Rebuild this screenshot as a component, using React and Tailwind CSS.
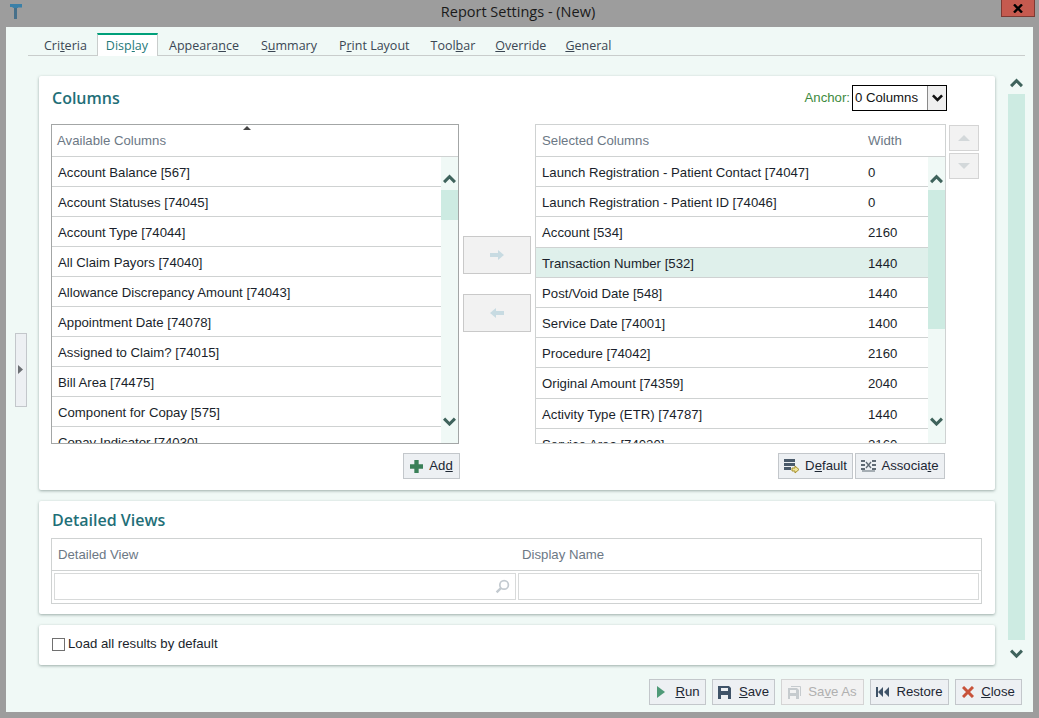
import React from 'react';

const available = [
    'Account Balance [567]',
    'Account Statuses [74045]',
    'Account Type [74044]',
    'All Claim Payors [74040]',
    'Allowance Discrepancy Amount [74043]',
    'Appointment Date [74078]',
    'Assigned to Claim? [74015]',
    'Bill Area [74475]',
    'Component for Copay [575]',
    'Copay Indicator [74030]',
];

const selected = [
    ['Launch Registration - Patient Contact [74047]', '0'],
    ['Launch Registration - Patient ID [74046]', '0'],
    ['Account [534]', '2160'],
    ['Transaction Number [532]', '1440'],
    ['Post/Void Date [548]', '1440'],
    ['Service Date [74001]', '1400'],
    ['Procedure [74042]', '2160'],
    ['Original Amount [74359]', '2040'],
    ['Activity Type (ETR) [74787]', '1440'],
    ['Service Area [74020]', '2160'],
];

const tabs = [
    { pre: 'Cri', key: 't', post: 'eria', cls: 'px-[11px]' },
    { pre: 'Disp', key: 'l', post: 'ay', active: true },
    { pre: 'Appeara', key: 'n', post: 'ce', cls: 'px-[11px]' },
    { pre: 'S', key: 'u', post: 'mmary', cls: 'px-[11px]' },
    { pre: 'P', key: 'r', post: 'int Layout', cls: 'px-[11px]' },
    { pre: 'Tool', key: 'b', post: 'ar', cls: 'px-[10px]' },
    { pre: '', key: 'O', post: 'verride', cls: 'pl-[10px] pr-[9.500px]' },
    { pre: '', key: 'G', post: 'eneral', cls: 'px-[9.500px]' },
];

const Chevron = ({ down, color = '#3f635c', size = 13 }) => (
    <svg width={size} height={size * 0.75} viewBox="0 0 12 9">
        <path d={down ? 'M1 1.500l5 5 5-5' : 'M1 7.500l5-5 5 5'} fill="none" stroke={color} strokeWidth="2.800" />
    </svg>
);

// list scrollbar: arrow, thumb, empty track, arrow
const ListScroll = ({ thumb }) => (
    <div className="w-[17px] bg-[#f0f9f6] flex flex-col items-center shrink-0">
        <div className="h-[33px] w-full flex items-end justify-center pb-[6px]"><Chevron /></div>
        <div className={`w-full bg-[#cdebe2] ${thumb}`}></div>
        <div className="flex-1"></div>
        <div className="h-[43px] w-full flex items-center justify-center"><Chevron down /></div>
    </div>
);

const ActionButton = ({ icon, className = '', children }) => (
    <button className={`h-[26px] flex items-center justify-center gap-[5px] bg-[#edf0f3] border border-[#c3c7cb] text-[13.200px] text-[#1d2733] ${className}`}>
        {icon}
        <span>{children}</span>
    </button>
);

const App = () => {
    return (
        <div className="h-[718px] w-[1039px] bg-[#9d9d9d] flex flex-col overflow-hidden font-['Liberation_Sans',sans-serif]">
            {/* Title bar */}
            <div className="h-[27px] flex items-start shrink-0">
                <svg className="ml-[9px] mt-[4px]" width="14" height="15" viewBox="0 0 14 15">
                    <path d="M1 0h12v3.500H9V4H4.500L3 3H1z" fill="#3a80a8" />
                    <path d="M5 4h3v11H5z" fill="#47708a" />
                </svg>
                <div className="flex-1 text-center text-[14.500px] leading-[23px] text-[#1a1a1a] pl-[12px] font-['Open_Sans',sans-serif]">Report Settings - (New)</div>
                <button className="w-[34px] h-[17px] mr-[4px] bg-[#c55a4f] border border-[#7d3a33] border-t-0 flex items-center justify-center">
                    <svg width="10" height="9" viewBox="0 0 10 9">
                        <path d="M1 .5l8 8M9 .5l-8 8" stroke="#000" strokeWidth="2.400" />
                    </svg>
                </button>
            </div>

            <div className="flex-1 mx-[6px] mb-[6px] bg-[#f0f9f6] flex flex-col">
                {/* Tabs */}
                <div className="ml-[22px] mr-[8px] mt-[6px] h-[23px] pl-[5px] flex border-b border-[#c9cdcc] font-['Open_Sans',sans-serif] text-[12.500px] text-[#3b4754]">
                    {tabs.map((t) => (
                        <div
                            key={t.pre + t.key}
                            className={t.active
                                ? 'h-[23px] -ml-px pl-[8px] pr-[9px] bg-white border-x border-[#c9cdcc] border-t-2 border-t-[#00a07a] text-[#1f7a7a] leading-[21px]'
                                : `h-[22px] leading-[26px] ${t.cls}`}
                        >
                            {t.pre}<u>{t.key}</u>{t.post}
                        </div>
                    ))}
                </div>

                {/* Main area */}
                <div className="mt-[20px] h-[589px] flex items-center pl-[9px]">
                    <div className="w-[12px] h-[74px] mb-[2px] bg-[#edf0f3] border border-[#c3c7cb] flex items-center justify-center shrink-0">
                        <svg width="6" height="9" viewBox="0 0 6 9"><path d="M0 0l5 4.500-5 4.500z" fill="#6b6f73" /></svg>
                    </div>

                    <div className="ml-[12px] w-[956px] h-full flex flex-col gap-[11px] shrink-0">
                        {/* Columns card */}
                        <div className="h-[414px] bg-white rounded-[2px] shadow-[0_1px_3px_rgba(120,140,135,0.7)] pl-[12px] shrink-0">
                            <div className="h-[48px] flex items-center pr-[48px] pb-[4px]">
                                <h2 className="flex-1 pl-[1px] text-[16px] font-semibold text-[#1f6f78] font-['Open_Sans',sans-serif]">Columns</h2>
                                <span className="text-[13.200px] text-[#3d8a3d] mr-[2px]">Anchor:</span>
                                <div className="w-[95px] h-[26px] border border-black flex items-center text-[13.200px] text-[#111] pl-[2px]">
                                    <span className="flex-1">0 Columns</span>
                                    <div className="w-[19px] h-full bg-[#efefef] border-l border-[#8a8a8a] flex items-center justify-center">
                                        <Chevron down color="#111" size={11} />
                                    </div>
                                </div>
                            </div>

                            <div className="flex">
                                {/* Available */}
                                <div className="w-[408px] h-[320px] border border-[#a3a6a6] flex flex-col shrink-0 relative">
                                    <div className="absolute left-[191px] top-[1px] w-0 h-0 border-x-[4px] border-x-transparent border-b-[4px] border-b-[#444]"></div>
                                    <div className="h-[32px] border-b border-[#cfd2d2] text-[13.200px] text-[#6c7885] pl-[5px] leading-[32px] shrink-0">Available Columns</div>
                                    <div className="flex-1 flex min-h-0">
                                        <div className="flex-1 overflow-hidden">
                                            {available.map((name) => (
                                                <div key={name} className="h-[30px] border-b border-[#cfd2d2] pl-[6px] text-[13.200px] text-[#1a1f2b] leading-[31px] whitespace-nowrap">{name}</div>
                                            ))}
                                        </div>
                                        <ListScroll thumb="h-[30px]" />
                                    </div>
                                </div>

                                {/* Move buttons */}
                                <div className="w-[76px] shrink-0 flex flex-col items-center pt-[112px] gap-[20px]">
                                    <button className="w-[68px] h-[38px] bg-[#f2f2f2] border border-[#c9c9c9] flex items-center justify-center">
                                        <svg width="14" height="10" viewBox="0 0 14 10"><path d="M0 3h8V0l6 5-6 5V7H0z" fill="#c8dbe2" /></svg>
                                    </button>
                                    <button className="w-[68px] h-[38px] bg-[#f2f2f2] border border-[#c9c9c9] flex items-center justify-center">
                                        <svg width="14" height="10" viewBox="0 0 14 10"><path d="M14 3H6V0L0 5l6 5V7h8z" fill="#c8dbe2" /></svg>
                                    </button>
                                </div>

                                {/* Selected */}
                                <div className="w-[411px] h-[320px] border border-[#cfd2d2] flex flex-col shrink-0">
                                    <div className="h-[32px] border-b border-[#cfd2d2] text-[13.200px] text-[#6c7885] pl-[6px] leading-[32px] flex shrink-0">
                                        <span className="w-[326px]">Selected Columns</span>
                                        <span>Width</span>
                                    </div>
                                    <div className="flex-1 flex min-h-0">
                                        <div className="flex-1 overflow-hidden">
                                            {selected.map(([name, width], i) => (
                                                <div key={name} className={`h-[30.200px] border-b border-[#cfd2d2] pl-[6px] text-[13.200px] text-[#1a1f2b] leading-[31px] whitespace-nowrap flex ${i === 3 ? 'bg-[#dff0eb]' : ''}`}>
                                                    <span className="w-[326px]">{name}</span>
                                                    <span>{width}</span>
                                                </div>
                                            ))}
                                        </div>
                                        <ListScroll thumb="h-[139px]" />
                                    </div>
                                </div>

                                {/* Order buttons */}
                                <div className="ml-[3px] flex flex-col gap-[2px] pt-[1px]">
                                    <button className="w-[30px] h-[26px] bg-[#f2f2f2] border border-[#d4d4d4] flex items-center justify-center">
                                        <svg width="12" height="6" viewBox="0 0 12 6"><path d="M6 0l6 6H0z" fill="#d3d8da" /></svg>
                                    </button>
                                    <button className="w-[30px] h-[26px] bg-[#f2f2f2] border border-[#d4d4d4] flex items-center justify-center">
                                        <svg width="12" height="6" viewBox="0 0 12 6"><path d="M0 0h12L6 6z" fill="#d3d8da" /></svg>
                                    </button>
                                </div>
                            </div>

                            {/* List actions */}
                            <div className="flex mt-[9px]">
                                <div className="w-[409px] flex justify-end">
                                    <ActionButton
                                        className="w-[57px]"
                                        icon={<svg className="mr-[1px]" width="13" height="13" viewBox="0 0 12 12"><path d="M4 0h4v4h4v4H8v4H4V8H0V4h4z" fill="#3a8058" /></svg>}
                                    >
                                        Ad<u>d</u>
                                    </ActionButton>
                                </div>
                                <div className="w-[485px] flex justify-end gap-[2px]">
                                    <ActionButton
                                        className="w-[75px]"
                                        icon={
                                            <svg width="16" height="15" viewBox="0 0 16 15">
                                                <path d="M0 0h11v3H0zM0 4h11v3H0zM0 8h7v3H0z" fill="#4a5a6a" />
                                                <path d="M8 9h3V7l4 3.500-4 3.500v-2H8z" fill="#efe59a" stroke="#a8912c" strokeWidth="1" />
                                            </svg>
                                        }
                                    >
                                        D<u>e</u>fault
                                    </ActionButton>
                                    <ActionButton
                                        className="w-[90px]"
                                        icon={
                                            <svg width="15" height="12" viewBox="0 0 15 12" fill="#5f6a74">
                                                <path d="M0 0h4v2H0zM0 4h4v2H0zM0 8h4v2H0zM11 0h4v2h-4zM11 4h4v2h-4zM11 8h4v2h-4zM1 10.500h13v1H1z" />
                                                <path d="M5 2l5 6M10 2L5 8" stroke="#5f6a74" strokeWidth="1.300" fill="none" />
                                            </svg>
                                        }
                                    >
                                        Associa<u>t</u>e
                                    </ActionButton>
                                </div>
                            </div>
                        </div>

                        {/* Detailed Views card */}
                        <div className="h-[113px] bg-white rounded-[2px] shadow-[0_1px_3px_rgba(120,140,135,0.7)] px-[12px] shrink-0">
                            <h2 className="h-[37px] pl-[1px] text-[16px] font-semibold text-[#1f6f78] font-['Open_Sans',sans-serif] leading-[38px]">Detailed Views</h2>
                            <div className="w-[931px] h-[66px] border border-[#cfd2d2]">
                                <div className="h-[32px] border-b border-[#cfd2d2] flex text-[13.200px] text-[#6c7885] leading-[31px] pl-[6px]">
                                    <span className="w-[464px]">Detailed View</span>
                                    <span>Display Name</span>
                                </div>
                                <div className="h-[27px] mt-[2px] mx-[2px] flex gap-[2px]">
                                    <div className="w-[462px] h-full border border-[#d8dada] flex items-center justify-end pr-[5px]">
                                        <svg width="15" height="15" viewBox="0 0 14 14">
                                            <circle cx="8.500" cy="5.500" r="4" fill="none" stroke="#c3cad0" strokeWidth="1.600" />
                                            <path d="M5.500 8.500L1.500 12.500" stroke="#c3cad0" strokeWidth="2.200" />
                                        </svg>
                                    </div>
                                    <div className="flex-1 h-full border border-[#d8dada]"></div>
                                </div>
                            </div>
                        </div>

                        {/* Load all card */}
                        <div className="h-[40px] bg-white rounded-[2px] shadow-[0_1px_3px_rgba(120,140,135,0.7)] pl-[13px] pb-[2px] flex items-center gap-[3px] text-[13.200px] text-[#1a1f2b] shrink-0">
                            <div className="w-[13px] h-[13px] border border-[#707070] bg-white"></div>
                            <span>Load all results by default</span>
                        </div>
                    </div>

                    {/* Page scrollbar */}
                    <div className="ml-[13px] w-[17px] h-full flex flex-col">
                        <div className="h-[18px] flex items-start justify-center pt-[2px]"><Chevron /></div>
                        <div className="h-[546px] bg-[#cdebe2]"></div>
                        <div className="flex-1 flex items-start justify-center pt-[9px]"><Chevron down /></div>
                    </div>
                </div>

                {/* Footer */}
                <div className="mt-[14px] pr-[11px] flex justify-end gap-[6px]">
                    <ActionButton
                        className="w-[57px] pl-[2px]"
                        icon={<svg className="mr-[5px]" width="8" height="12" viewBox="0 0 8 12"><path d="M0 0l8 6-8 6z" fill="#4f9a78" /></svg>}
                    >
                        <u>R</u>un
                    </ActionButton>
                    <ActionButton
                        className="w-[63px]"
                        icon={
                            <svg className="mr-[3px]" width="13" height="13" viewBox="0 0 13 13">
                                <path fillRule="evenodd" d="M0 0h11l2 2v11H0zM3 2v3h7V2zM3 9v4h7V9z" fill="#3f5368" />
                            </svg>
                        }
                    >
                        <u>S</u>ave
                    </ActionButton>
                    <button className="w-[83px] h-[26px] flex items-center justify-center gap-[7px] bg-[#f2f2f2] border border-[#d4d4d4] text-[13.200px] text-[#b0b0b0]">
                        <svg width="13" height="13" viewBox="0 0 13 13">
                            <path fillRule="evenodd" d="M0 2h9l2 2v9H0zM2 4v3h6V4zM2 10v3h6v-3z" fill="#c6cbce" />
                            <path d="M3 .5h9.500V10" fill="none" stroke="#c6cbce" />
                        </svg>
                        <span>Sa<u>v</u>e As</span>
                    </button>
                    <ActionButton
                        className="w-[79px]"
                        icon={<svg className="mr-[2px]" width="13" height="10" viewBox="0 0 13 10"><path d="M0 0h2v10H0zM7 0v10L2 5zM13 0v10L8 5z" fill="#3f5368" /></svg>}
                    >
                        Restore
                    </ActionButton>
                    <ActionButton
                        className="w-[67px]"
                        icon={<svg className="mr-[2px]" width="12" height="12" viewBox="0 0 12 12"><path d="M1 1l10 10M11 1L1 11" stroke="#c8523a" strokeWidth="3" /></svg>}
                    >
                        <u>C</u>lose
                    </ActionButton>
                </div>
            </div>
        </div>
    );
};

export default App;
